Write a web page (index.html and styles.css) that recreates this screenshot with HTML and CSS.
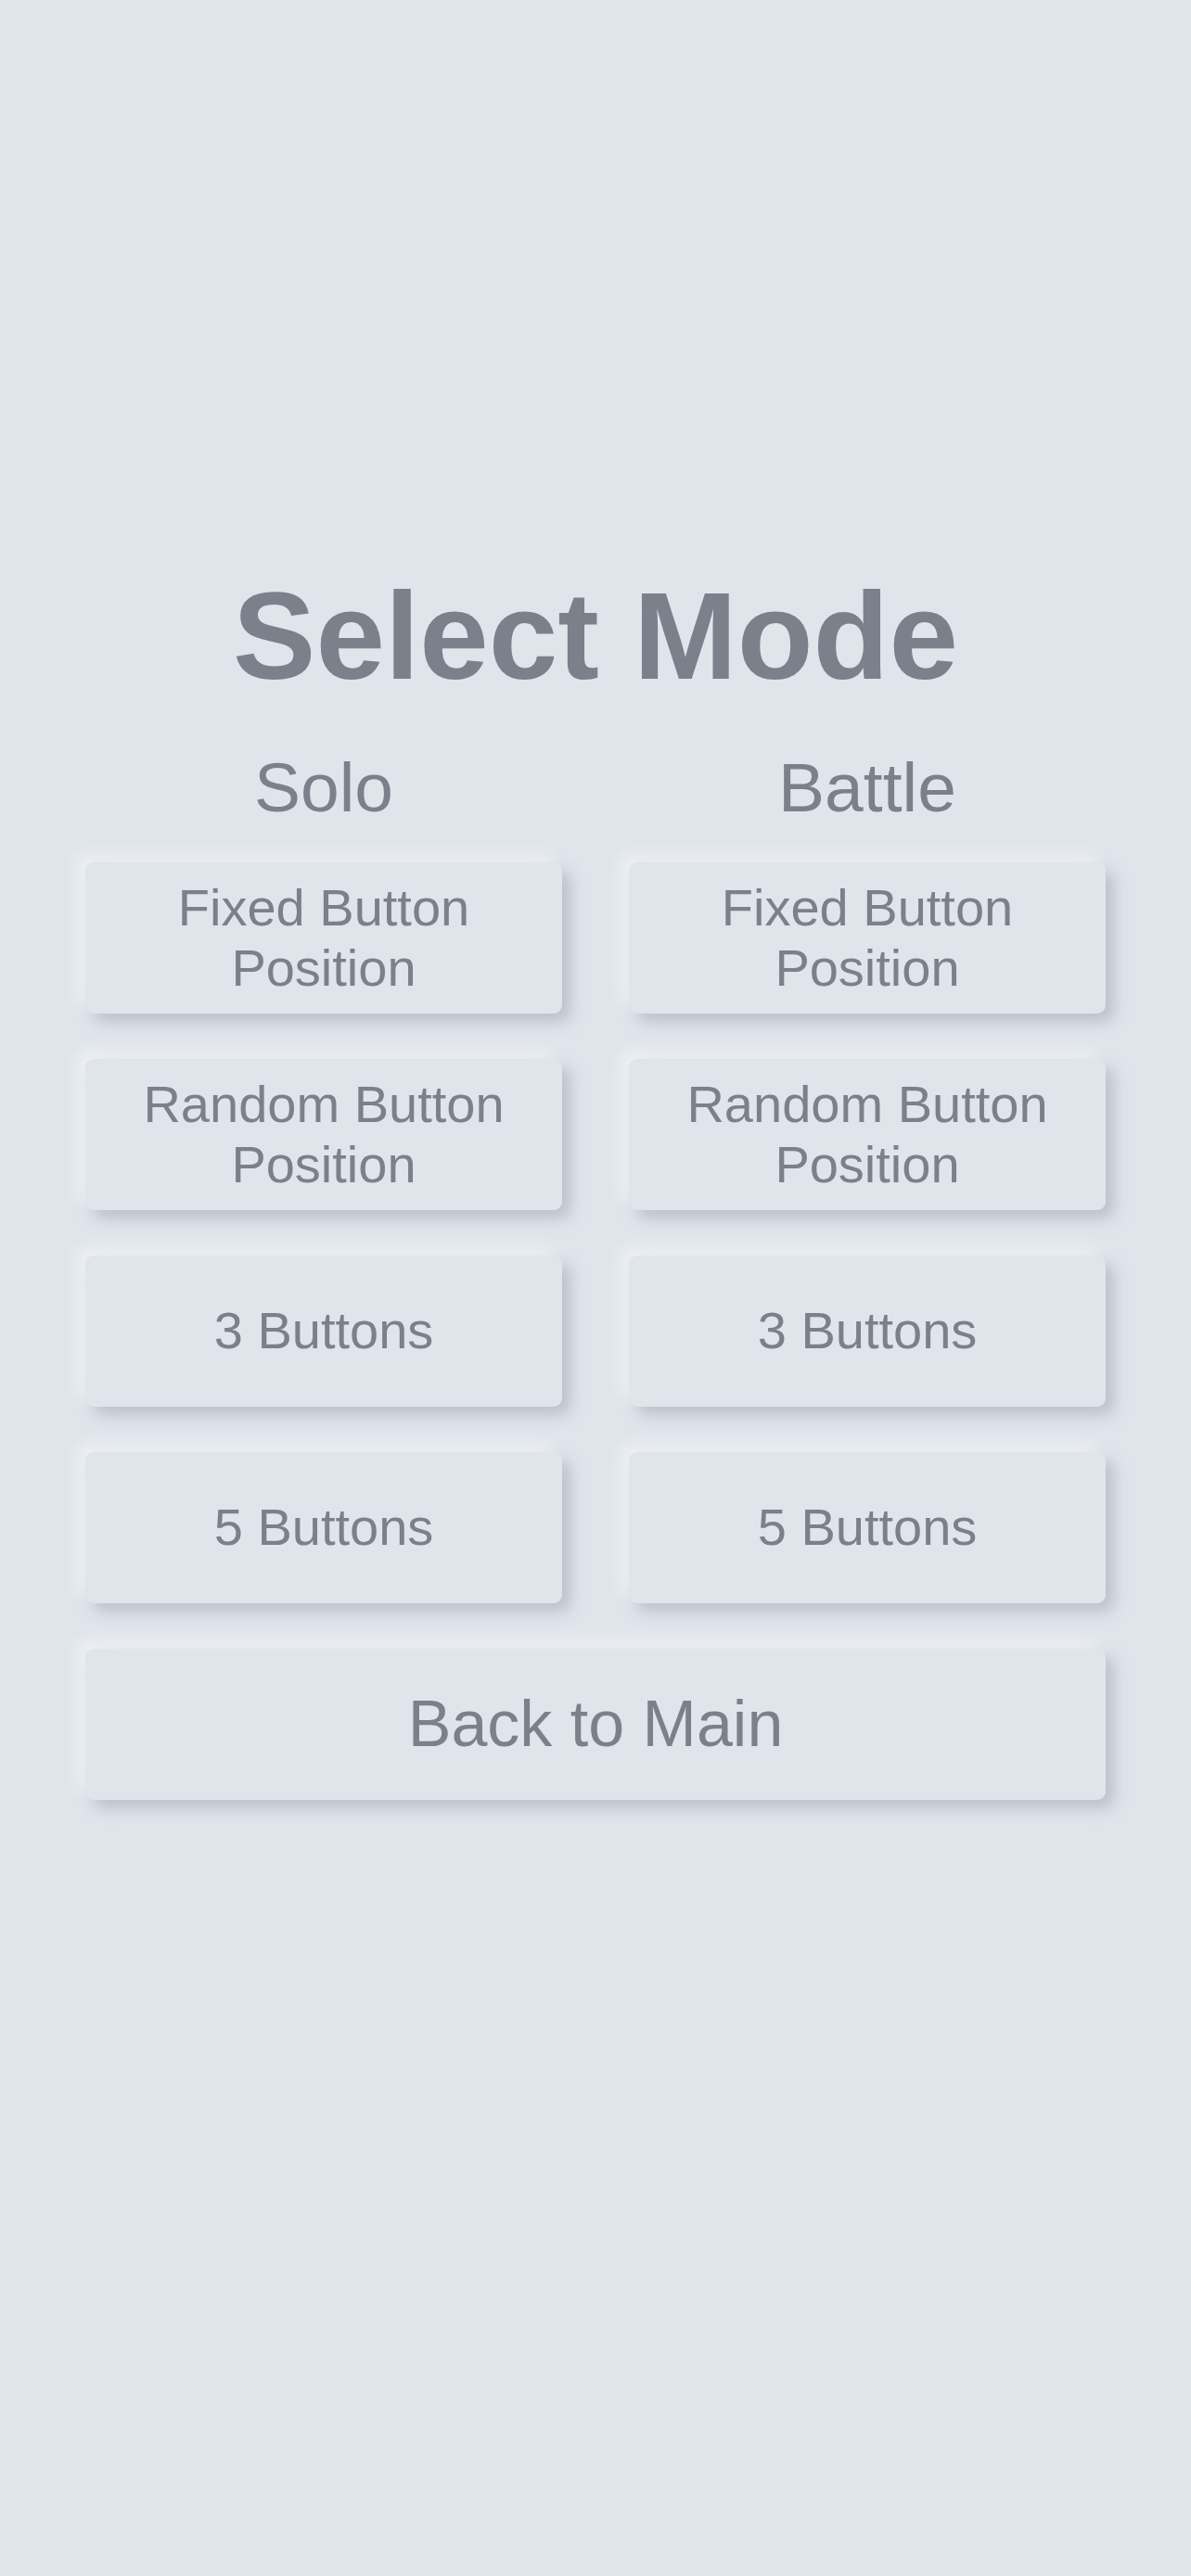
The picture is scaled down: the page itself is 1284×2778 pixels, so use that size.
FILE: index.html
```html
<!DOCTYPE html>
<html lang="en">
<head>
<meta charset="utf-8">
<title>Select Mode</title>
<link rel="stylesheet" href="styles.css">
</head>
<body>
<main class="screen">
  <h1 class="title">Select Mode</h1>
  <div class="modes">
    <section class="column">
      <h2 class="column-title">Solo</h2>
      <button class="mode-btn">Fixed Button Position</button>
      <button class="mode-btn">Random Button Position</button>
      <button class="mode-btn">3 Buttons</button>
      <button class="mode-btn">5 Buttons</button>
    </section>
    <section class="column">
      <h2 class="column-title">Battle</h2>
      <button class="mode-btn">Fixed Button Position</button>
      <button class="mode-btn">Random Button Position</button>
      <button class="mode-btn">3 Buttons</button>
      <button class="mode-btn">5 Buttons</button>
    </section>
  </div>
  <button class="mode-btn back-btn">Back to Main</button>
</main>
</body>
</html>
```
FILE: styles.css
```css
* { box-sizing: border-box; }
html, body {
  margin: 0;
  padding: 0;
  background: #e0e5ec;
}
body {
  font-family: "Liberation Sans", Arial, sans-serif;
  color: #7c808b;
  min-height: 2778px;
}
.screen {
  width: 1100px;
  margin: 0 auto;
  padding-top: 609px;
  display: flex;
  flex-direction: column;
}
.title {
  margin: 0;
  font-size: 134px;
  line-height: 1.15;
  font-weight: 700;
  text-align: center;
  color: #7c808b;
}
.modes {
  margin-top: 43px;
  display: grid;
  grid-template-columns: 1fr 1fr;
  column-gap: 72px;
}
.column {
  display: flex;
  flex-direction: column;
  gap: 49.5px;
}
.column-title {
  margin: 0 0 -11.5px 0;
  font-size: 75px;
  line-height: 1.15;
  font-weight: 400;
  text-align: center;
  color: #7c808b;
}
.mode-btn {
  height: 162.5px;
  padding: 0 24px;
  border: none;
  border-radius: 9px;
  background: #e0e5ec;
  color: #7c808b;
  font-family: "Liberation Sans", Arial, sans-serif;
  font-size: 56px;
  line-height: 1.15;
  text-align: center;
  display: flex;
  align-items: center;
  justify-content: center;
  box-shadow: 9px 9px 16px rgba(163, 170, 178, 0.6), -9px -9px 16px rgba(255, 255, 255, 0.45);
}
.back-btn {
  margin-top: 49.5px;
  font-size: 70px;
}
```
